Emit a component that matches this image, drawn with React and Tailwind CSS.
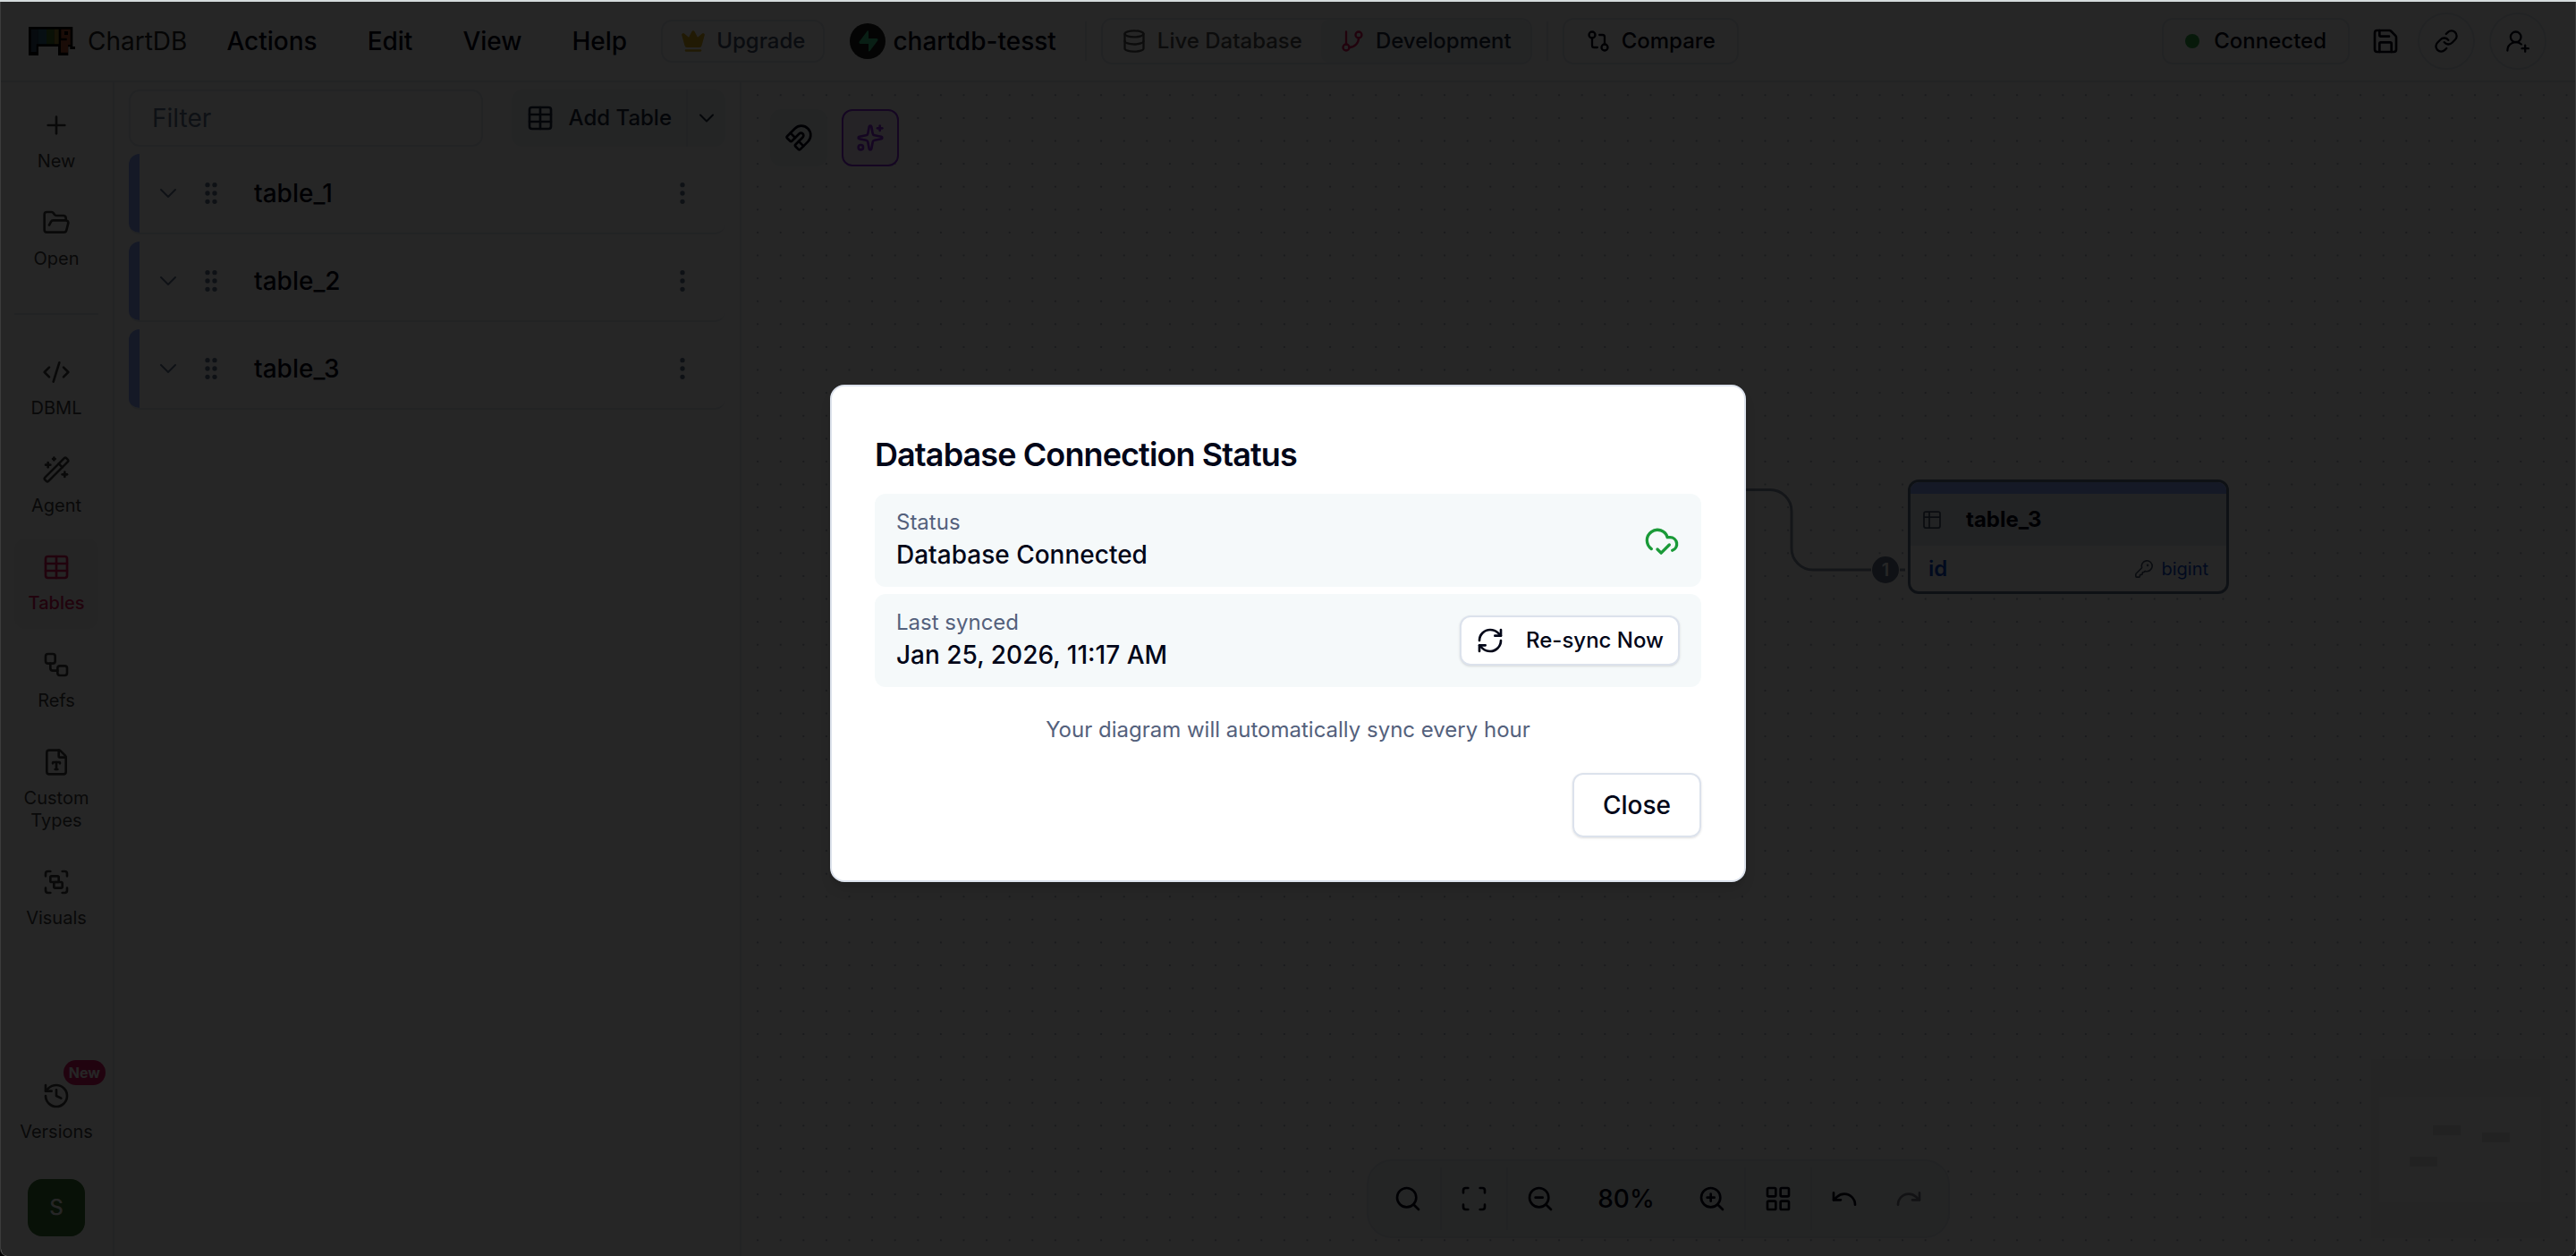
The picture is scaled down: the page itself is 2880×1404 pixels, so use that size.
import React, { useState } from 'react';
import {
  ChevronDown,
  CloudCheck,
  CodeXml,
  Crown,
  Database,
  EllipsisVertical,
  FileType,
  FolderOpen,
  GitBranch,
  GitCompare,
  GripVertical,
  Group,
  History,
  KeyRound,
  LayoutGrid,
  Link,
  Magnet,
  Plus,
  Redo,
  RefreshCw,
  Save,
  Scan,
  Search,
  Sparkles,
  Table,
  Table2,
  Undo,
  UserRoundPlus,
  WandSparkles,
  Workflow,
  ZoomIn,
  ZoomOut,
} from 'lucide-react';
import clsx from 'clsx';

const MENUS = ['Actions', 'Edit', 'View', 'Help'];

const TABLES = ['table_1', 'table_2', 'table_3'];

const FILE_ITEMS = [
  { title: 'New', icon: Plus },
  { title: 'Open', icon: FolderOpen },
];

const SECTION_ITEMS = [
  { title: 'DBML', icon: CodeXml },
  { title: 'Agent', icon: WandSparkles },
  { title: 'Tables', icon: Table },
  { title: 'Refs', icon: Workflow },
  { title: 'Custom Types', icon: FileType },
  { title: 'Visuals', icon: Group },
];

const Logo = () => (
  <svg width="52" height="32" viewBox="0 0 156 96">
    {/* outline */}
    <path d="M0 0h148v66h8v9h-17v-8h-6v29H99V66H33v30H0z" fill="#000" />
    {/* body */}
    <path d="M8 8h24v50h-6v26H8z" fill="#334c66" />
    <path d="M32 8h28v50H32z" fill="#2f6583" />
    <path d="M60 8h26v50H60z" fill="#46752c" />
    <path d="M86 8h15v50H86z" fill="#9a8434" />
    {/* head and trunk */}
    <path d="M109 8h31v52h-8v26h-24V46h20v-8h-19z" fill="#b05030" />
    <rect x="120" y="15" width="12" height="12" fill="#000" />
  </svg>
);

const ProjectIcon = () => (
  <svg width="40" height="40" viewBox="0 0 40 40">
    <circle cx="20" cy="20" r="20" fill="#1c1c1c" />
    <path
      d="M19.500 8.800c.6-.8 1.500-.4 1.500.5V17h9c1.300 0 2 1.400 1.200 2.400L22.500 31c-.6.800-1.500.4-1.500-.5V23h-9c-1.300 0-2-1.400-1.200-2.400z"
      fill="#3ecf8e"
    />
  </svg>
);

const SidebarItem = ({ title, icon: Icon, active, onClick }) => (
  <button
    onClick={onClick}
    className={clsx(
      'flex w-full flex-col items-center gap-3 rounded-xl px-1 py-4 text-[20px] leading-[25px]',
      active ? 'bg-neutral-100 font-medium text-[#dd1458]' : 'text-neutral-700'
    )}
  >
    <Icon className="size-8" />
    {title}
  </button>
);

const Sidebar = () => {
  const [section, setSection] = useState('Tables');

  return (
    <aside className="flex w-[127px] shrink-0 flex-col border-r-2 border-slate-200 pt-4 pr-4 pb-[22px] pl-[15px]">
      <nav className="flex flex-col gap-2">
        {FILE_ITEMS.map((item) => (
          <SidebarItem key={item.title} {...item} />
        ))}
        <hr className="my-6 border-t-2 border-slate-200" />
        {SECTION_ITEMS.map((item) => (
          <SidebarItem
            key={item.title}
            {...item}
            active={item.title === section}
            onClick={() => setSection(item.title)}
          />
        ))}
      </nav>
      <div className="mt-auto flex flex-col items-center gap-6">
        <div className="relative">
          <SidebarItem title="Versions" icon={History} />
          <span className="absolute -top-2 -right-2.5 rounded-full bg-[#dd1468] px-[6px] text-[16px] leading-7 font-bold text-white">
            New
          </span>
        </div>
        <button className="flex size-16 items-center justify-center rounded-2xl bg-[#35702f] text-2xl font-medium text-white">
          S
        </button>
      </div>
    </aside>
  );
};

const TopNavbar = () => (
  <header className="flex h-[90px] shrink-0 items-center justify-between border-b-2 border-slate-200 pr-8 pl-[31px] font-medium">
    <div className="flex items-center">
      <a href="#" className="flex items-center gap-[14px] text-[28px] font-normal text-neutral-800">
        <Logo />
        ChartDB
      </a>
      <nav className="ml-4 flex text-[28px]">
        {MENUS.map((menu) => (
          <button key={menu} className="px-7">
            {menu}
          </button>
        ))}
      </nav>
      <button className="ml-[10px] flex h-12 items-center gap-3 rounded-xl border-2 border-slate-200 px-5 text-2xl text-slate-600">
        <Crown className="size-7 fill-[#d9ad20] text-[#d9ad20]" />
        Upgrade
      </button>
      <button className="ml-7 flex items-center gap-2 text-[28px]">
        <ProjectIcon />
        chartdb-tesst
      </button>
      <div className="mr-4 ml-8 h-11 w-[2px] bg-slate-200" />
      <div className="flex h-[52px] overflow-hidden rounded-xl border-2 border-slate-200 text-2xl">
        <button className="flex items-center gap-3 px-[21px] text-neutral-600">
          <Database className="size-7" />
          Live Database
        </button>
        <button className="flex items-center gap-3 rounded-l-lg bg-slate-100 px-[21px] text-slate-800">
          <GitBranch className="size-7 text-[#dd1458]" />
          Development
        </button>
      </div>
      <div className="mx-4 h-11 w-[2px] bg-slate-200" />
      <button className="flex h-[52px] items-center gap-3 rounded-xl border-2 border-slate-200 px-6 text-2xl">
        <GitCompare className="size-7" />
        Compare
      </button>
    </div>
    <div className="flex items-center gap-4">
      <button className="flex h-[52px] items-center gap-4 rounded-xl border-2 border-slate-200 px-6 text-2xl">
        <span className="size-4 rounded-full bg-[#2fa548]" />
        Connected
      </button>
      <button aria-label="Save" className="ml-2 flex h-16 items-center">
        <Save className="size-8" />
      </button>
      <button aria-label="Share" className="ml-1 flex size-16 items-center justify-center rounded-full border-2 border-slate-200">
        <Link className="size-7" />
      </button>
      <button aria-label="Invite" className="flex size-16 items-center justify-center rounded-full border-2 border-slate-200">
        <UserRoundPlus className="size-7" />
      </button>
    </div>
  </header>
);

const TablesPanel = () => (
  <section className="flex w-[701px] shrink-0 flex-col gap-2 border-r-2 border-slate-200 px-4 pt-2">
    <div className="flex h-16 gap-8">
      <input
        type="text"
        placeholder="Filter"
        aria-label="Filter"
        className="w-0 flex-1 rounded-xl border-2 border-slate-200 px-6 text-[28px] placeholder:text-slate-500"
      />
      <div className="flex rounded-xl bg-slate-100 text-2xl font-medium text-slate-800">
        <button className="flex items-center gap-4 px-4">
          <Table className="size-8" />
          Add Table
        </button>
        <button aria-label="More options" className="flex w-11 items-center justify-center border-l-2 border-slate-200">
          <ChevronDown className="size-7" strokeWidth={1.75} />
        </button>
      </div>
    </div>
    {TABLES.map((table) => (
      <div key={table} className="flex h-[90px] overflow-hidden rounded-xl border-b-2 border-slate-200">
        <div className="w-3 bg-[#8fa8ff]" />
        <div className="flex flex-1 items-center text-slate-500">
          <button aria-label="Expand" className="ml-4">
            <ChevronDown className="size-8" strokeWidth={1.5} />
          </button>
          <GripVertical className="ml-4 size-8" />
          <span className="ml-8 flex-1 text-[28px] font-medium text-slate-950">{table}</span>
          <button aria-label="Table actions" className="mr-8">
            <EllipsisVertical className="size-8" />
          </button>
        </div>
      </div>
    ))}
  </section>
);

const Separator = () => <div className="mx-1 h-[70px] w-[2px] bg-slate-200" />;

const ToolbarButton = ({ label, icon: Icon, disabled }) => (
  <button
    aria-label={label}
    disabled={disabled}
    className="flex size-16 items-center justify-center disabled:opacity-50"
  >
    <Icon className="size-8" />
  </button>
);

const Toolbar = () => (
  <div className="absolute bottom-5 left-1/2 flex h-[88px] -translate-x-1/2 items-center rounded-[28px] border-2 border-slate-200 bg-slate-100 px-3">
    <ToolbarButton label="Search" icon={Search} />
    <Separator />
    <ToolbarButton label="Show all" icon={Scan} />
    <Separator />
    <ToolbarButton label="Zoom out" icon={ZoomOut} />
    <button className="w-32 text-center text-[28px] font-medium">80%</button>
    <ToolbarButton label="Zoom in" icon={ZoomIn} />
    <Separator />
    <ToolbarButton label="Reorder" icon={LayoutGrid} />
    <Separator />
    <ToolbarButton label="Undo" icon={Undo} />
    <div className="w-2" />
    <ToolbarButton label="Redo" icon={Redo} disabled />
  </div>
);

const MiniMap = () => (
  <svg className="absolute right-7 bottom-5" width="200" height="200" viewBox="0 0 200 200">
    <rect width="200" height="200" fill="#f6f6f6" />
    <rect x="9" y="42" width="181" height="118" fill="#ffffff" />
    <rect x="69" y="74" width="31" height="11" fill="#e2e2e2" />
    <rect x="124" y="82" width="31" height="11" fill="#e2e2e2" />
    <rect x="43" y="109" width="31" height="11" fill="#e2e2e2" />
  </svg>
);

const TableNode = ({ name }) => (
  <div className="absolute top-[444px] left-[1304px] w-[359px] overflow-hidden rounded-xl border-3 border-slate-500 bg-white">
    <div className="h-[13px] bg-[#8fa8ff]" />
    <div className="flex h-[58px] items-center gap-[26px] bg-slate-200 px-3 text-2xl font-bold">
      <Table2 className="size-6 text-slate-600" strokeWidth={1.75} />
      {name}
    </div>
    <div className="flex h-[51px] items-center px-5 text-[#0848c8]">
      <span className="flex-1 text-2xl font-semibold">id</span>
      <KeyRound className="mr-2 size-[22px] text-slate-600" strokeWidth={1.75} />
      <span className="text-xl">bigint</span>
    </div>
  </div>
);

const Canvas = () => (
  <main className="relative flex-1 overflow-hidden">
    <svg className="absolute inset-0 size-full">
      <defs>
        <pattern id="dots" x="5.3" y="1.5" width="25.6" height="25.6" patternUnits="userSpaceOnUse">
          <circle cx="12.8" cy="12.8" r="0.9" fill="#8a93a3" />
        </pattern>
      </defs>
      <rect width="100%" height="100%" fill="url(#dots)" />
      <path
        d="M1001 455.500H1150a24 24 0 0 1 24 24V521a24 24 0 0 0 24 24H1263M1295 545h6"
        fill="none"
        stroke="#8792a5"
        strokeWidth="3"
      />
      <circle cx="1279" cy="545" r="15" fill="#64748b" />
      <text x="1279" y="552" textAnchor="middle" className="fill-white text-xl font-semibold">
        1
      </text>
    </svg>
    <TableNode name="table_3" />
    <div className="absolute top-[30px] left-8 flex gap-4">
      <button aria-label="Snap to grid" className="flex size-16 items-center justify-center rounded-xl bg-slate-100">
        <Magnet className="size-8" />
      </button>
      <button
        aria-label="AI assistant"
        className="flex size-16 items-center justify-center rounded-xl border-2 border-[#8b2be0] bg-purple-100 text-[#8b2be0]"
      >
        <Sparkles className="size-8" />
      </button>
    </div>
    <Toolbar />
    <MiniMap />
  </main>
);

const StatusCard = ({ label, value, children }) => (
  <div className="flex items-center justify-between rounded-xl bg-[#f5f9fa] px-6 py-4">
    <div>
      <p className="text-2xl text-[#54617c]">{label}</p>
      <p className="text-[28px] leading-10 font-medium">{value}</p>
    </div>
    {children}
  </div>
);

const ConnectionDialog = ({ onClose }) => (
  <div className="absolute inset-0 z-10 flex items-center justify-center bg-black/85 pt-[10px]">
    <div
      role="dialog"
      aria-labelledby="dialog-title"
      className="w-full max-w-5xl rounded-2xl border-2 border-[#dce2ec] bg-white p-12 shadow-lg"
    >
      <h2 id="dialog-title" className="text-4xl leading-[56px] font-semibold tracking-tight">
        Database Connection Status
      </h2>
      <div className="mt-4 flex flex-col gap-2">
        <StatusCard label="Status" value="Database Connected">
          <CloudCheck className="size-10 text-[#1a9a38]" />
        </StatusCard>
        <StatusCard label="Last synced" value="Jan 25, 2026, 11:17 AM">
          <button className="flex h-14 items-center gap-6 rounded-xl border-2 border-[#dce2ec] bg-white px-4 text-2xl font-medium shadow-sm">
            <RefreshCw className="size-8" />
            Re-sync Now
          </button>
        </StatusCard>
      </div>
      <p className="my-8 text-center text-2xl text-[#54617c]">
        Your diagram will automatically sync every hour
      </p>
      <div className="flex justify-end">
        <button
          onClick={onClose}
          className="h-[72px] rounded-xl border-2 border-[#dce2ec] px-8 text-[28px] font-medium shadow-sm"
        >
          Close
        </button>
      </div>
    </div>
  </div>
);

export default function App() {
  const [dialogOpen, setDialogOpen] = useState(true);

  return (
    <div className="flex h-screen flex-col border-t-2 border-[#d5dcdd] bg-black font-[Inter,sans-serif] text-slate-950">
      <div className="flex min-h-0 flex-1 flex-col overflow-hidden rounded-b-lg border-x border-[#3c3c3c]">
        <div className="relative flex min-h-0 flex-1 flex-col bg-white">
          <TopNavbar />
          <div className="flex min-h-0 flex-1">
            <Sidebar />
            <TablesPanel />
            <Canvas />
          </div>
          {dialogOpen && <ConnectionDialog onClose={() => setDialogOpen(false)} />}
        </div>
      </div>
    </div>
  );
}
